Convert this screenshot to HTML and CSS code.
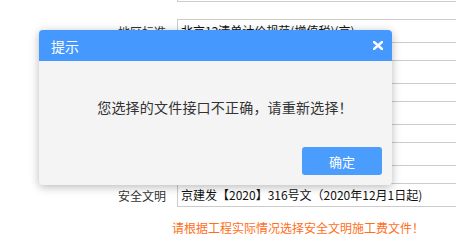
FILE: index.html
```html
<!DOCTYPE html>
<html lang="zh-CN">
<head>
    <meta charset="UTF-8">
    <title>提示</title>
    <link rel="stylesheet" href="styles.css">
</head>
<body>

    <div class="form">
        <div class="row">
            <span class="label"></span>
            <div class="field"></div>
        </div>
        <div class="row">
            <span class="label">地区标准</span>
            <div class="field">北京12清单计价规范(增值税)(京)</div>
        </div>
        <div class="row">
            <span class="label"></span>
            <div class="field"></div>
        </div>
        <div class="row">
            <span class="label"></span>
            <div class="field"></div>
        </div>
        <div class="row">
            <span class="label"></span>
            <div class="field"></div>
        </div>
        <div class="row">
            <span class="label">安全文明</span>
            <div class="field">京建发【2020】316号文（2020年12月1日起)</div>
        </div>
        <p class="hint">请根据工程实际情况选择安全文明施工费文件！</p>
    </div>

    <div class="dialog">
        <div class="dialog-head">
            <span class="dialog-title">提示</span>
            <svg class="close" width="10" height="9" viewBox="0 0 10 9">
                <path d="M1 1 L9 8 M9 1 L1 8" stroke="#fff" stroke-width="2.4" stroke-linecap="square"/>
            </svg>
        </div>
        <div class="dialog-body">您选择的文件接口不正确，请重新选择！</div>
        <div class="dialog-foot">
            <button class="btn">确定</button>
        </div>
    </div>

</body>
</html>
```

FILE: styles.css
```css
body {
    margin: 0;
    width: 456px;
    height: 247px;
    overflow: hidden;
    position: relative;
    background-color: #fff;
    font-family: "Microsoft YaHei", "Noto Sans CJK SC", sans-serif;
    font-size: 12px;
    color: #333;
}
.form {
    margin-top: -22px;
}
.row {
    display: flex;
    align-items: center;
    height: 24px;
    margin-bottom: 17px;
}
.label {
    width: 177px;
    padding-right: 11px;
    text-align: right;
    box-sizing: border-box;
    flex-shrink: 0;
}
.field {
    width: 279px;
    height: 24px;
    line-height: 22px;
    box-sizing: border-box;
    border: 1px solid #ccc;
    border-right: none;
    padding-left: 3px;
    color: #111;
    white-space: nowrap;
    overflow: hidden;
    flex-shrink: 0;
}
.hint {
    margin: -4px 0 0 172px;
    color: #ff6e1a;
    line-height: 16px;
}
.dialog {
    position: absolute;
    left: 39px;
    top: 30px;
    width: 353px;
    height: 155px;
    background-color: #f4f4f4;
    border-radius: 4px;
    box-shadow: 0 2px 10px rgba(0, 0, 0, 0.28);
    display: flex;
    flex-direction: column;
    overflow: hidden;
}
.dialog-head {
    height: 31px;
    background-color: #4599fe;
    display: flex;
    align-items: center;
    justify-content: space-between;
    padding: 0 9px 0 12px;
}
.dialog-title {
    color: #fff;
    font-size: 14px;
}
.dialog-body {
    flex: 1;
    padding: 36px 0 0 19px;
    text-align: center;
    font-size: 14px;
    line-height: 20px;
    letter-spacing: 0.2px;
    color: #333;
}
.dialog-foot {
    display: flex;
    justify-content: flex-end;
    padding: 0 10px 10px 0;
}
.btn {
    width: 80px;
    height: 28px;
    border: none;
    border-radius: 3px;
    background-color: #4a9cfd;
    color: #fff;
    font-family: inherit;
    font-size: 13px;
    padding: 0;
}
```
